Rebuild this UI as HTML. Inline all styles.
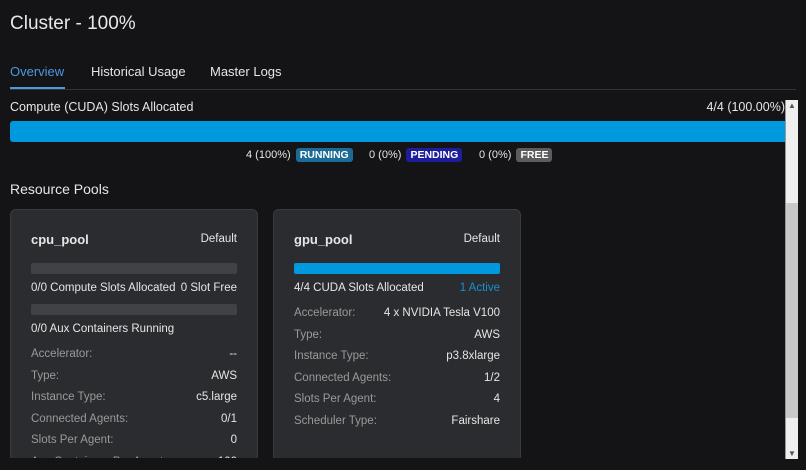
<!DOCTYPE html><html><head><style>
*{margin:0;padding:0;box-sizing:border-box}
body{width:806px;height:470px;background:#141416;font-family:"Liberation Sans",sans-serif;color:#e6e6e6;position:relative;overflow:hidden}
.a{position:absolute;white-space:nowrap}
.card{position:absolute;top:209px;width:248px;height:249px;background:#2b2c2f;border:1px solid #3a3b3e;border-bottom:none;border-radius:6px 6px 0 0;overflow:hidden}
.card .a{font-size:11.5px}
.l{left:20px;color:#9a9a9a}.r{right:20px;color:#e6e6e6}
.bar{position:absolute;left:20px;right:20px;height:11px;border-radius:2px;background:#414246}
.tag{display:inline-block;padding:1px 4px;border-radius:3px;font-weight:bold;font-size:10.5px;color:#fff}
</style></head><body>
<div class="a" style="left:10px;top:13px;font-size:19px;color:#e8e8e8">Cluster - 100%</div>
<div class="a" style="left:10px;top:64px;font-size:13px;color:#4a9ae0">Overview</div>
<div style="position:absolute;left:10px;top:87px;width:55px;height:2px;background:#4a9ae0"></div>
<div class="a" style="left:91px;top:64px;font-size:13px">Historical Usage</div>
<div class="a" style="left:210px;top:64px;font-size:13px">Master Logs</div>
<div style="position:absolute;left:10px;top:89px;width:786px;height:1px;background:#333"></div>
<div class="a" style="left:10px;top:100px;font-size:12.5px">Compute (CUDA) Slots Allocated</div>
<div class="a" style="right:21px;top:100px;font-size:12.5px">4/4 (100.00%)</div>
<div style="position:absolute;left:10px;top:121px;width:775px;height:21px;background:#0099dd;border-radius:3px 0 0 3px"></div>
<div class="a" style="left:246px;top:148px;font-size:11px">4 (100%) <span class="tag" style="background:#1c6b94;margin-left:2px">RUNNING</span></div>
<div class="a" style="left:369px;top:148px;font-size:11px">0 (0%) <span class="tag" style="background:#1e1e9c;margin-left:2px">PENDING</span></div>
<div class="a" style="left:479px;top:148px;font-size:11px">0 (0%) <span class="tag" style="background:#5c5c5c;margin-left:2px">FREE</span></div>
<div class="a" style="left:10px;top:181px;font-size:14px">Resource Pools</div>
<div class="card" style="left:10px">
<div class="a" style="left:20px;top:22px;font-size:13px;font-weight:bold">cpu_pool</div>
<div class="a r" style="top:23px">Default</div>
<div class="bar" style="top:53px"></div>
<div class="a" style="left:20px;top:72px">0/0 Compute Slots Allocated</div>
<div class="a r" style="top:72px">0 Slot Free</div>
<div class="bar" style="top:94px"></div>
<div class="a" style="left:20px;top:113px">0/0 Aux Containers Running</div>
<div class="a l" style="top:138px">Accelerator:</div><div class="a r" style="top:138px">--</div>
<div class="a l" style="top:160px">Type:</div><div class="a r" style="top:160px">AWS</div>
<div class="a l" style="top:181px">Instance Type:</div><div class="a r" style="top:181px">c5.large</div>
<div class="a l" style="top:203px">Connected Agents:</div><div class="a r" style="top:203px">0/1</div>
<div class="a l" style="top:224px">Slots Per Agent:</div><div class="a r" style="top:224px">0</div>
<div class="a l" style="top:246px">Aux Containers Per Agent:</div><div class="a r" style="top:246px">100</div>
</div>
<div class="card" style="left:273px">
<div class="a" style="left:20px;top:22px;font-size:13px;font-weight:bold">gpu_pool</div>
<div class="a r" style="top:23px">Default</div>
<div class="bar" style="top:53px;background:#0099dd"></div>
<div class="a" style="left:20px;top:72px">4/4 CUDA Slots Allocated</div>
<div class="a r" style="top:72px;color:#1a8fd0">1 Active</div>
<div class="a l" style="top:97px">Accelerator:</div><div class="a r" style="top:97px">4 x NVIDIA Tesla V100</div>
<div class="a l" style="top:119px">Type:</div><div class="a r" style="top:119px">AWS</div>
<div class="a l" style="top:140px">Instance Type:</div><div class="a r" style="top:140px">p3.8xlarge</div>
<div class="a l" style="top:162px">Connected Agents:</div><div class="a r" style="top:162px">1/2</div>
<div class="a l" style="top:183px">Slots Per Agent:</div><div class="a r" style="top:183px">4</div>
<div class="a l" style="top:205px">Scheduler Type:</div><div class="a r" style="top:205px">Fairshare</div>
</div>
<div style="position:absolute;left:785px;top:100px;width:13px;height:359px;background:#efefef;border-left:1px solid #999"></div>
<div style="position:absolute;left:786px;top:203px;width:12px;height:215px;background:#c9c9c9"></div>
<div class="a" style="left:788px;top:101px;font-size:8px;color:#555">&#9650;</div>
<div class="a" style="left:788px;top:449px;font-size:8px;color:#555">&#9660;</div>
</body></html>
